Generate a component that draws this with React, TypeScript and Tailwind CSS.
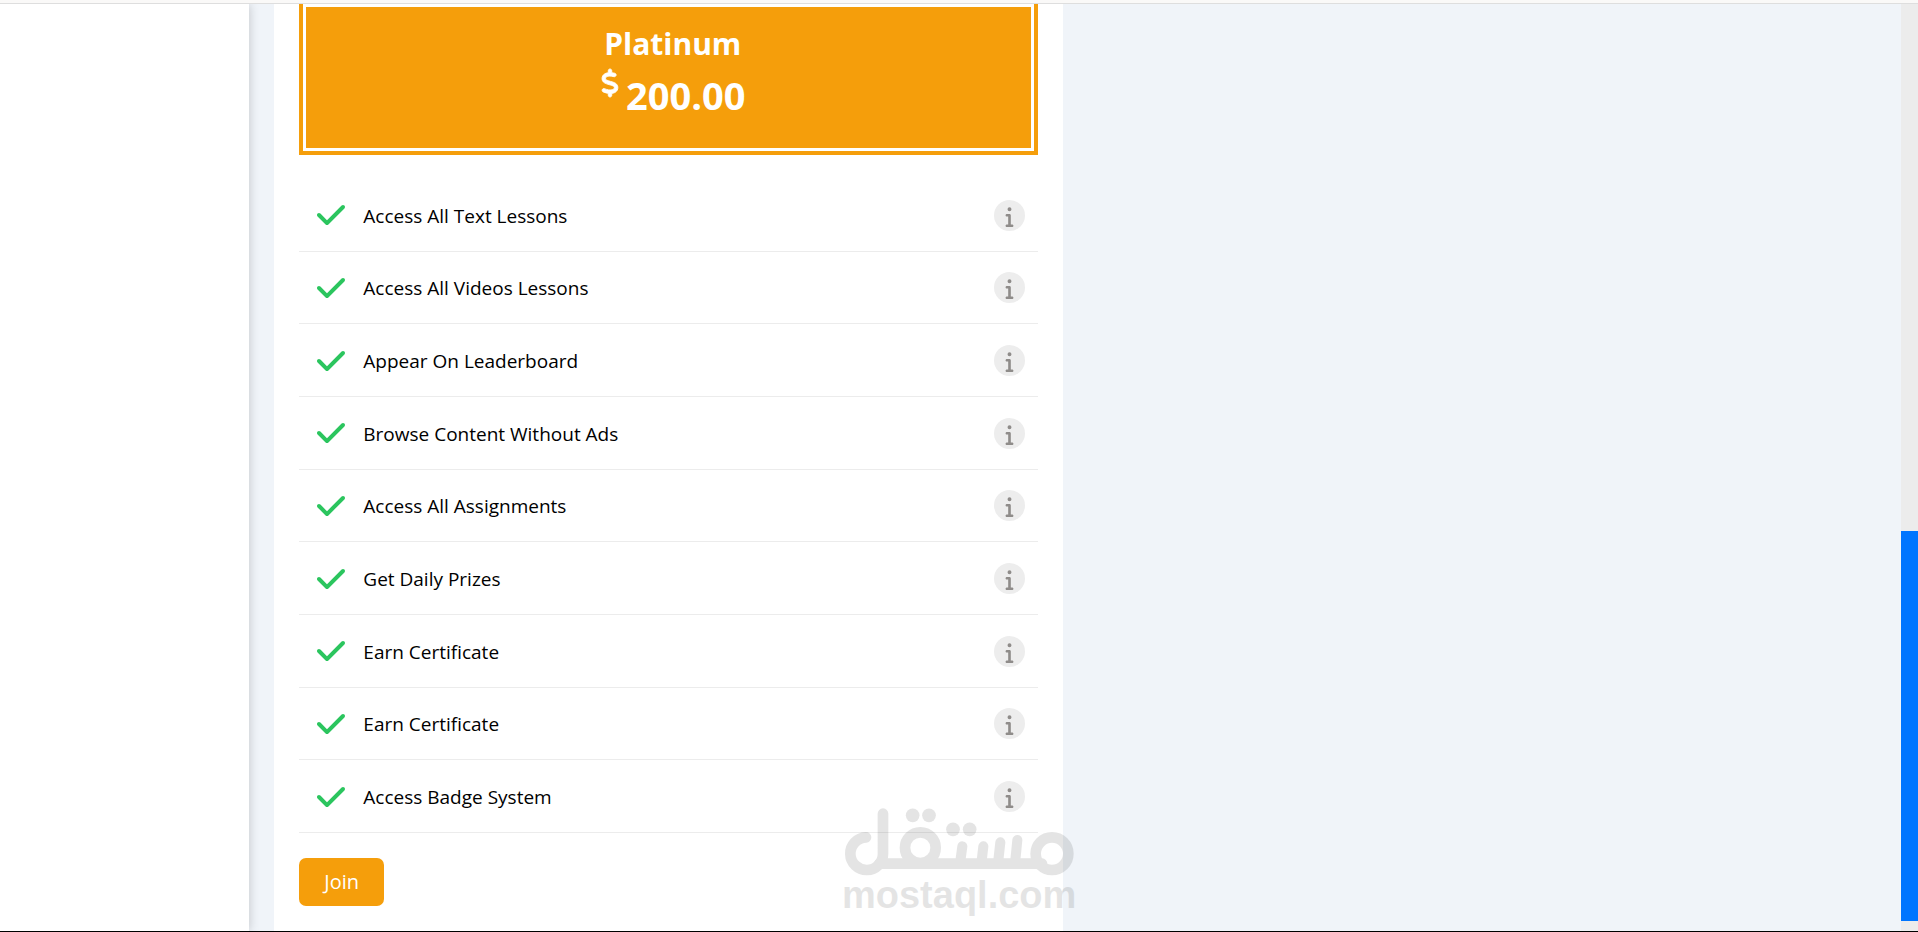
import { FaCheck, FaDollarSign, FaInfo } from 'react-icons/fa6';

const features: string[] = [
  'Access All Text Lessons',
  'Access All Videos Lessons',
  'Appear On Leaderboard',
  'Browse Content Without Ads',
  'Access All Assignments',
  'Get Daily Prizes',
  'Earn Certificate',
  'Earn Certificate',
  'Access Badge System',
];

function FeatureRow({ label }: { label: string }) {
  return (
    <li className="flex items-center gap-4 border-b border-[#ececec] pl-4 pr-[13px] pt-px">
      <FaCheck aria-hidden="true" className="size-8 shrink-0 text-[#2bc55e]" />
      <span className="flex-1 pt-px text-[19px] leading-7 text-black">{label}</span>
      <button
        type="button"
        aria-label={`About ${label}`}
        className="flex size-[31px] shrink-0 items-center justify-center rounded-full bg-[#ededed] pt-0.5 text-[#8f8c8a]"
      >
        <FaInfo aria-hidden="true" className="size-[21px]" />
      </button>
    </li>
  );
}

function PlanHeader({ name, price }: { name: string; price: string }) {
  return (
    <header className="border-x-4 border-b-4 border-[#f59e0b]">
      <div className="border-[3px] border-white bg-[#f59e0b] pb-[25px] pt-[14px] text-center font-bold text-white">
        <h2 className="pl-2 text-[30px] leading-[46px]">{name}</h2>
        <p className="flex justify-center gap-0.5 pl-1 text-[38px] leading-[56px]">
          <FaDollarSign aria-label="$" className="mt-0.5 size-7 overflow-visible" stroke="currentColor" strokeWidth="16" />
          <span>{price}</span>
        </p>
      </div>
    </header>
  );
}

function Watermark() {
  return (
    <div className="pointer-events-none absolute -right-[11px] bottom-[17px] flex w-[230px] flex-col text-black opacity-10">
      <svg viewBox="72 80 690 204" className="h-[68px] w-full" fill="none" stroke="currentColor" strokeWidth="32" strokeLinecap="round" aria-label="مستقل">
        <path d="M138 168a49 49 0 1 0 51 49V97" />
        <path d="M178 247H666" />
        <circle cx="301" cy="199" r="46" />
        <circle cx="696" cy="217" r="49" />
        <path d="M427 195l-7 52M490 195l-6 52M541 183l-7 64M592 176l-7 71" strokeWidth="30" />
        <g fill="currentColor" stroke="none">
          <circle cx="278" cy="102" r="20.500" />
          <circle cx="327" cy="102" r="20.500" />
          <circle cx="399" cy="144" r="20.500" />
          <circle cx="449" cy="144" r="20.500" />
        </g>
      </svg>
      <span className="flex justify-center whitespace-nowrap font-['Liberation_Sans',sans-serif] text-[38px] font-bold leading-[38px]">mostaql.com</span>
    </div>
  );
}

export default function App() {
  return (
    <div className="flex min-h-screen flex-col border-b border-black bg-[#f0f4f9] font-['Open_Sans',sans-serif]">
      <div className="h-1 shrink-0 border-b border-[#dedede] bg-[#faf9f8]" />
      <div className="flex flex-1">
        <aside className="z-10 w-[13%] shrink-0 bg-white shadow-[0_0_10px_rgba(0,0,0,0.2)] [clip-path:inset(0_-24px_0_0)]" />
        <main className="grid flex-1 grid-cols-2 gap-6 px-[25px]">
          <section className="relative bg-white px-[25px] pb-[25px]">
            <PlanHeader name="Platinum" price="200.00" />
            <ul className="mt-6 grid min-h-[654px] auto-rows-fr">
              {features.map((label, index) => (
                <FeatureRow key={index} label={label} />
              ))}
            </ul>
            <button type="button" className="mt-[25px] rounded-[7px] bg-[#f59e0b] px-[25px] py-2 text-[20px] leading-8 text-white">
              Join
            </button>
            <Watermark />
          </section>
        </main>
        <div className="flex w-[17px] shrink-0 flex-col justify-end bg-[#ececec] pb-[10px]">
          <div className="h-[42.5%] bg-[#0075ff]" />
        </div>
      </div>
    </div>
  );
}
